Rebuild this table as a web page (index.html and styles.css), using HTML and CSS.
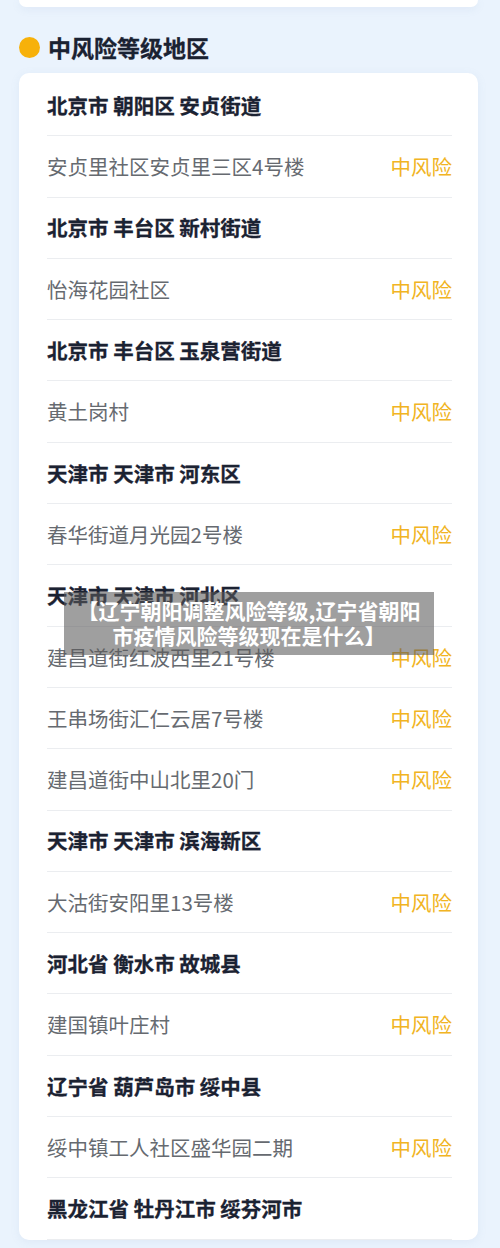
FILE: index.html
```html
<!DOCTYPE html>
<html lang="zh-CN">
<head>
<meta charset="utf-8">
<title>中风险等级地区</title>
<link rel="stylesheet" href="styles.css">
</head>
<body>
<div class="page">
  <div class="top-card"></div>
  <div class="section-title">
    <span class="dot"></span>
    <h2>中风险等级地区</h2>
  </div>
  <div class="card">
    <div class="row head">北京市 朝阳区 安贞街道</div>
    <div class="row item"><span>安贞里社区安贞里三区4号楼</span><span class="risk">中风险</span></div>
    <div class="row head">北京市 丰台区 新村街道</div>
    <div class="row item"><span>怡海花园社区</span><span class="risk">中风险</span></div>
    <div class="row head">北京市 丰台区 玉泉营街道</div>
    <div class="row item"><span>黄土岗村</span><span class="risk">中风险</span></div>
    <div class="row head">天津市 天津市 河东区</div>
    <div class="row item"><span>春华街道月光园2号楼</span><span class="risk">中风险</span></div>
    <div class="row head">天津市 天津市 河北区</div>
    <div class="row item"><span>建昌道街红波西里21号楼</span><span class="risk">中风险</span></div>
    <div class="row item"><span>王串场街汇仁云居7号楼</span><span class="risk">中风险</span></div>
    <div class="row item"><span>建昌道街中山北里20门</span><span class="risk">中风险</span></div>
    <div class="row head">天津市 天津市 滨海新区</div>
    <div class="row item"><span>大沽街安阳里13号楼</span><span class="risk">中风险</span></div>
    <div class="row head">河北省 衡水市 故城县</div>
    <div class="row item"><span>建国镇叶庄村</span><span class="risk">中风险</span></div>
    <div class="row head">辽宁省 葫芦岛市 绥中县</div>
    <div class="row item"><span>绥中镇工人社区盛华园二期</span><span class="risk">中风险</span></div>
    <div class="row head">黑龙江省 牡丹江市 绥芬河市</div>
  </div>
</div>
<div class="caption">【辽宁朝阳调整风险等级,辽宁省朝阳<br>市疫情风险等级现在是什么】</div>
</body>
</html>
```
FILE: styles.css
```css
html, body {
  margin: 0;
  padding: 0;
}
body {
  background: #eaf3fd;
  font-family: "Noto Sans CJK SC", "Noto Sans", sans-serif;
  width: 500px;
  height: 1248px;
  overflow: hidden;
  position: relative;
}
.page {
  padding: 0 22px 0 19px;
}
.top-card {
  height: 7px;
  background: #ffffff;
  border-radius: 0 0 10px 10px;
  box-shadow: 0 2px 8px rgba(120, 150, 190, 0.12);
}
.section-title {
  display: flex;
  align-items: center;
  gap: 8px;
  height: 34px;
  margin-top: 23px;
  margin-bottom: 9px;
}
.dot {
  width: 21px;
  height: 21px;
  border-radius: 50%;
  background: #f7b10a;
  flex: none;
}
.section-title h2 {
  margin: 0;
  font-size: 23px;
  font-weight: 700;
  color: #1a2232;
  line-height: 34px;
  -webkit-text-stroke: 0.3px #1a2232;
}
.card {
  background: #ffffff;
  border-radius: 10px;
  padding: 2px 26px 0 28px;
  box-shadow: 0 2px 10px rgba(120, 150, 190, 0.10);
}
.row {
  height: 60.3px;
  border-bottom: 1px solid #ebedf0;
  display: flex;
  align-items: center;
  justify-content: space-between;
  font-size: 20.5px;
  line-height: 1;
}
.row.head {
  font-weight: 700;
  color: #1b2232;
  -webkit-text-stroke: 0.3px #1b2232;
}
.row.item {
  color: #666a70;
}
.risk {
  color: #f1b423;
}
.caption {
  position: absolute;
  left: 64px;
  top: 592px;
  width: 370px;
  height: 63px;
  box-sizing: border-box;
  padding-top: 6px;
  background: rgba(90, 90, 90, 0.58);
  color: #ffffff;
  font-size: 21px;
  font-weight: 700;
  line-height: 25px;
  text-align: center;
}
```
